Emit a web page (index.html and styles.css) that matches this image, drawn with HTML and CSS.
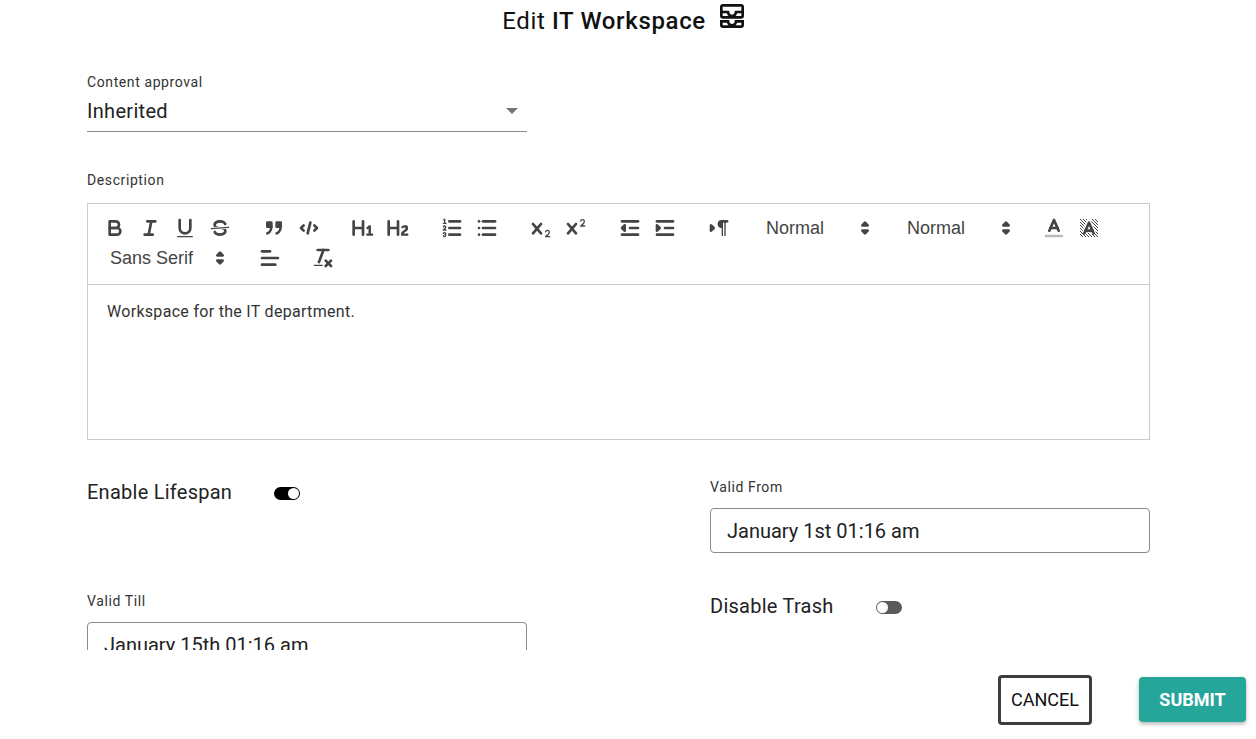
FILE: index.html
```html
<!DOCTYPE html>
<html>
<head>
<meta charset="UTF-8">
<title>Edit IT Workspace</title>
<link rel="stylesheet" href="styles.css">
</head>
<body>
<div class="page">
	<h1 class="title">Edit <span class="title-name">IT Workspace</span>
		<svg class="title-icon" viewBox="0 0 24 24"><path d="M19 3H5c-1.1 0-2 .9-2 2v7c0 1.1.9 2 2 2h14c1.1 0 2-.9 2-2V5c0-1.1-.9-2-2-2zM5 10h3.13c.21.78.67 1.47 1.27 2H5v-2zm14 2h-4.4c.6-.53 1.06-1.22 1.27-2H19v2zm0-4h-5v1c0 1.07-.93 2-2 2s-2-.93-2-2V8H5V5h14v3zm-2 7h-3v1c0 .47-.19.9-.48 1.25-.37.45-.92.75-1.52.75s-1.15-.3-1.52-.75c-.29-.35-.48-.78-.48-1.25v-1H3v4c0 1.1.9 2 2 2h14c1.1 0 2-.9 2-2v-4h-4zM5 17h3.13c.02.09.06.17.09.25.24.68.65 1.28 1.18 1.75H5v-2zm14 2h-4.4c.54-.47.95-1.07 1.18-1.75.03-.08.07-.16.09-.25H19v2z"/></svg>
	</h1>

	<div class="scroll">
		<div class="select-field">
			<label class="field-label">Content approval</label>
			<div class="select-value">Inherited<span class="select-arrow"></span></div>
		</div>

		<label class="field-label desc-label">Description</label>
		<div class="editor">
			<div class="toolbar">
				<span class="group">
					<button class="tool"><svg viewBox="0 0 18 18"><path class="st" d="M5,4H9.5A2.5,2.5,0,0,1,12,6.5v0A2.5,2.5,0,0,1,9.5,9H5A0,0,0,0,1,5,9V4A0,0,0,0,1,5,4Z"/><path class="st" d="M5,9h5.5A2.5,2.5,0,0,1,13,11.5v0A2.5,2.5,0,0,1,10.5,14H5a0,0,0,0,1,0,0V9A0,0,0,0,1,5,9Z"/></svg></button>
					<button class="tool"><svg viewBox="0 0 18 18"><line class="st" x1="7" x2="13" y1="4" y2="4"/><line class="st" x1="5" x2="11" y1="14" y2="14"/><line class="st" x1="8" x2="10" y1="14" y2="4"/></svg></button>
					<button class="tool"><svg viewBox="0 0 18 18"><path class="st" d="M5,3V9a4.012,4.012,0,0,0,4,4H9a4.012,4.012,0,0,0,4-4V3"/><rect class="fl" height="1" rx=".5" ry=".5" width="12" x="3" y="15"/></svg></button>
					<button class="tool"><svg viewBox="0 0 18 18"><line class="st thin" x1="15.5" x2="2.5" y1="8.5" y2="9.5"/><path class="fl" d="M9.007,8C6.542,7.791,6,7.519,6,6.5,6,5.792,7.283,5,9,5c1.571,0,2.765.679,2.969,1.309a1,1,0,0,0,1.9-.617C13.356,4.106,11.354,3,9,3,6.2,3,4,4.538,4,6.5a3.2,3.2,0,0,0,.5,1.843Z"/><path class="fl" d="M8.984,10C11.457,10.208,12,10.479,12,11.5c0,.708-1.283,1.5-3,1.5-1.571,0-2.765-.679-2.969-1.309a1,1,0,1,0-1.9.617C4.644,13.894,6.646,15,9,15c2.8,0,5-1.538,5-3.5a3.2,3.2,0,0,0-.5-1.843Z"/></svg></button>
				</span>
				<span class="group">
					<button class="tool"><svg viewBox="0 0 18 18"><rect class="st fl" height="3" width="3" x="4" y="5"/><rect class="st fl" height="3" width="3" x="11" y="5"/><path class="st" d="M7,8c0,4.031-3,5-3,5"/><path class="st" d="M14,8c0,4.031-3,5-3,5"/></svg></button>
					<button class="tool"><svg viewBox="0 0 18 18"><polyline class="st" points="5 7 3 9 5 11"/><polyline class="st" points="13 7 15 9 13 11"/><line class="st" x1="10" x2="8" y1="5" y2="13"/></svg></button>
				</span>
				<span class="group">
					<button class="tool"><svg viewBox="0 0 18 18"><path class="fl" d="M10,4V14a1,1,0,0,1-2,0V10H3v4a1,1,0,0,1-2,0V4A1,1,0,0,1,3,4V8H8V4a1,1,0,0,1,2,0Zm6.06787,9.209H14.98975V7.59863a.54085.54085,0,0,0-.605-.60547h-.62744a1.01119,1.01119,0,0,0-.748.29688L11.645,8.56641a.5435.5435,0,0,0-.022.8584l.28613.30762a.53861.53861,0,0,0,.84717.0332l.09912-.08789a1.2137,1.2137,0,0,0,.2417-.35254h.02246s-.01123.30859-.01123.60547V13.209H12.041a.54085.54085,0,0,0-.605.60547v.43945a.54085.54085,0,0,0,.605.60547h4.02686a.54085.54085,0,0,0,.605-.60547v-.43945A.54085.54085,0,0,0,16.06787,13.209Z"/></svg></button>
					<button class="tool"><svg viewBox="0 0 18 18"><path class="fl" d="M16.73975,13.81445v.43945a.54085.54085,0,0,1-.605.60547H11.855a.58392.58392,0,0,1-.64893-.60547V14.0127c0-2.90527,3.39941-3.42187,3.39941-4.55469a.77675.77675,0,0,0-.84717-.78125,1.17684,1.17684,0,0,0-.83594.38477c-.2749.26367-.561.374-.85791.13184l-.4292-.34082c-.30811-.24219-.38525-.51758-.1543-.81445a2.97155,2.97155,0,0,1,2.45361-1.17676,2.45393,2.45393,0,0,1,2.68408,2.40918c0,2.45312-3.1792,2.92676-3.27832,3.93848h2.79443A.54085.54085,0,0,1,16.73975,13.81445ZM9,3A.99974.99974,0,0,0,8,4V8H3V4A1,1,0,0,0,1,4V14a1,1,0,0,0,2,0V10H8v4a1,1,0,0,0,2,0V4A.99974.99974,0,0,0,9,3Z"/></svg></button>
				</span>
				<span class="group">
					<button class="tool"><svg viewBox="0 0 18 18"><line class="st" x1="7" x2="15" y1="4" y2="4"/><line class="st" x1="7" x2="15" y1="9" y2="9"/><line class="st" x1="7" x2="15" y1="14" y2="14"/><line class="st thin" x1="2.5" x2="4.5" y1="5.5" y2="5.5"/><path class="fl" d="M3.5,6A0.5,0.5,0,0,1,3,5.5V3.085l-0.276.138A0.5,0.5,0,0,1,2.053,3c-0.124-.247-0.023-0.324.224-0.447l1-.5A0.5,0.5,0,0,1,4,2.5v3A0.5,0.5,0,0,1,3.5,6Z"/><path class="st thin" d="M4.5,10.5h-2c0-.234,1.85-1.076,1.85-2.234A0.959,0.959,0,0,0,2.5,8.156"/><path class="st thin" d="M2.5,14.846a0.959,0.959,0,0,0,1.85-.109A0.7,0.7,0,0,0,3.75,14a0.688,0.688,0,0,0,.6-0.736,0.959,0.959,0,0,0-1.85-.109"/></svg></button>
					<button class="tool"><svg viewBox="0 0 18 18"><line class="st" x1="6" x2="15" y1="4" y2="4"/><line class="st" x1="6" x2="15" y1="9" y2="9"/><line class="st" x1="6" x2="15" y1="14" y2="14"/><line class="st" x1="3" x2="3" y1="4" y2="4"/><line class="st" x1="3" x2="3" y1="9" y2="9"/><line class="st" x1="3" x2="3" y1="14" y2="14"/></svg></button>
				</span>
				<span class="group">
					<button class="tool"><svg viewBox="0 0 18 18"><path class="fl" d="M15.5,15H13.861a3.858,3.858,0,0,0,1.914-2.975,1.8,1.8,0,0,0-1.6-1.751A1.921,1.921,0,0,0,12.021,11.7a0.50013,0.50013,0,1,0,.957.291h0a0.914,0.914,0,0,1,1.053-.725,0.81,0.81,0,0,1,.744.762c0,1.076-1.16971,1.86982-1.93971,2.43082A1.45639,1.45639,0,0,0,12,15.5a0.5,0.5,0,0,0,.5.5h3A0.5,0.5,0,0,0,15.5,15Z"/><path class="fl" d="M9.65,5.241a1,1,0,0,0-1.409.108L6,7.964,3.759,5.349A1,1,0,0,0,2.192,6.59178Q2.21541,6.6213,2.241,6.649L4.684,9.5,2.241,12.35A1,1,0,0,0,3.71,13.70722q0.02557-.02768.049-0.05722L6,11.036,8.241,13.65a1,1,0,1,0,1.567-1.24277Q9.78459,12.3777,9.759,12.35L7.316,9.5,9.759,6.651A1,1,0,0,0,9.65,5.241Z"/></svg></button>
					<button class="tool"><svg viewBox="0 0 18 18"><path class="fl" d="M15.5,7H13.861a4.015,4.015,0,0,0,1.914-2.975,1.8,1.8,0,0,0-1.6-1.751A1.922,1.922,0,0,0,12.021,3.7a0.5,0.5,0,1,0,.957.291,0.917,0.917,0,0,1,1.053-.725,0.81,0.81,0,0,1,.744.762c0,1.077-1.164,1.925-1.934,2.486A1.423,1.423,0,0,0,12,7.5a0.5,0.5,0,0,0,.5.5h3A0.5,0.5,0,0,0,15.5,7Z"/><path class="fl" d="M9.651,5.241a1,1,0,0,0-1.41.108L6,7.964,3.759,5.349a1,1,0,1,0-1.519,1.3L4.683,9.5,2.241,12.35a1,1,0,1,0,1.519,1.3L6,11.036,8.241,13.65a1,1,0,0,0,1.519-1.3L7.317,9.5,9.759,6.651A1,1,0,0,0,9.651,5.241Z"/></svg></button>
				</span>
				<span class="group">
					<button class="tool"><svg viewBox="0 0 18 18"><line class="st" x1="3" x2="15" y1="14" y2="14"/><line class="st" x1="3" x2="15" y1="4" y2="4"/><line class="st" x1="9" x2="15" y1="9" y2="9"/><polyline class="st fl" points="5 7 5 11 3 9 5 7"/></svg></button>
					<button class="tool"><svg viewBox="0 0 18 18"><line class="st" x1="3" x2="15" y1="14" y2="14"/><line class="st" x1="3" x2="15" y1="4" y2="4"/><line class="st" x1="9" x2="15" y1="9" y2="9"/><polyline class="st fl" points="3 7 3 11 5 9 3 7"/></svg></button>
				</span>
				<span class="group">
					<button class="tool"><svg viewBox="0 0 18 18"><polygon class="st fl" points="3 11 5 9 3 7 3 11"/><line class="st" x1="15" x2="11" y1="4" y2="4"/><path class="fl" d="M11,3a3,3,0,0,0,0,6h1V3H11Z"/><rect class="fl" height="11" width="1" x="11" y="4"/><rect class="fl" height="11" width="1" x="13" y="4"/></svg></button>
				</span>
				<span class="group picker-group">
					<span class="picker"><span class="picker-label">Normal</span><svg viewBox="0 0 18 18"><polygon class="st fl" points="7 11 9 13 11 11 7 11"/><polygon class="st fl" points="7 7 9 5 11 7 7 7"/></svg></span>
					<span class="picker"><span class="picker-label">Normal</span><svg viewBox="0 0 18 18"><polygon class="st fl" points="7 11 9 13 11 11 7 11"/><polygon class="st fl" points="7 7 9 5 11 7 7 7"/></svg></span>
					<button class="tool"><svg viewBox="0 0 18 18"><line class="st color-line" x1="3" x2="15" y1="15" y2="15"/><polyline class="st" points="5.5 11 9 3 12.5 11"/><line class="st" x1="11.63" x2="6.38" y1="9" y2="9"/></svg></button>
					<button class="tool"><svg viewBox="0 0 18 18"><defs><pattern id="hatch" width="2.25" height="2.25" patternUnits="userSpaceOnUse"><rect width=".75" height=".75" fill="#444"/><rect x=".75" y=".75" width=".75" height=".75" fill="#444"/><rect x="1.5" y="1.5" width=".75" height=".75" fill="#444"/></pattern></defs><rect x="2.25" y="2.25" width="13.5" height="13.5" fill="url(#hatch)"/><polyline class="halo" points="5.5 13 9 5 12.5 13"/><polyline class="st" points="5.5 13 9 5 12.5 13"/><line class="st" x1="11.63" x2="6.38" y1="11" y2="11"/></svg></button>
				</span>
				<span class="group font-group">
					<span class="picker font-picker"><span class="picker-label">Sans Serif</span><svg viewBox="0 0 18 18"><polygon class="st fl" points="7 11 9 13 11 11 7 11"/><polygon class="st fl" points="7 7 9 5 11 7 7 7"/></svg></span>
					<button class="tool"><svg viewBox="0 0 18 18"><line class="st" x1="3" x2="15" y1="9" y2="9"/><line class="st" x1="3" x2="13" y1="14" y2="14"/><line class="st" x1="3" x2="9" y1="4" y2="4"/></svg></button>
				</span>
				<span class="group">
					<button class="tool"><svg viewBox="0 0 18 18"><line class="st" x1="5" x2="13" y1="3" y2="3"/><line class="st" x1="6" x2="9.35" y1="12" y2="3"/><line class="st" x1="11" x2="15" y1="11" y2="15"/><line class="st" x1="15" x2="11" y1="11" y2="15"/><rect class="fl" height="1" rx=".5" ry=".5" width="7" x="2" y="14"/></svg></button>
				</span>
			</div>
			<div class="editor-body">Workspace for the IT department.</div>
		</div>

		<div class="two-col">
			<div class="switch-row">
				<span class="switch-label">Enable Lifespan</span>
				<span class="switch switch-on"></span>
			</div>
			<div class="date-field">
				<label class="field-label">Valid From</label>
				<div class="date-input">January 1st 01:16 am</div>
			</div>
			<div class="date-field">
				<label class="field-label">Valid Till</label>
				<div class="date-input">January 15th 01:16 am</div>
			</div>
			<div class="switch-row">
				<span class="switch-label">Disable Trash</span>
				<span class="switch"></span>
			</div>
		</div>
	</div>

	<div class="actions">
		<button class="btn btn-cancel">CANCEL</button>
		<button class="btn btn-submit">SUBMIT</button>
	</div>
</div>
</body>
</html>
```
FILE: styles.css
```css
* {
	box-sizing: border-box;
}

html, body {
	margin: 0;
	height: 100%;
	background: #fff;
	overflow: hidden;
}

body {
	font-family: Roboto, "Liberation Sans", sans-serif;
	color: rgba(0, 0, 0, 0.87);
}

.page {
	height: 739px;
	display: flex;
	flex-direction: column;
}

.title {
	margin: 0;
	height: 42px;
	padding-top: 3px;
	padding-right: 6px;
	display: flex;
	justify-content: center;
	align-items: flex-start;
	font-size: 24px;
	line-height: 36px;
	font-weight: 400;
	letter-spacing: 0.65px;
	white-space: pre;
	color: #111;
}

.title-name {
	font-weight: 500;
}

.title-icon {
	width: 32px;
	height: 32px;
	margin-left: 10px;
	margin-top: -3px;
	fill: #111;
}

.scroll {
	height: 608px;
	overflow: hidden;
	padding: 32px 106px 0 87px;
}

.field-label {
	display: block;
	font-size: 14px;
	line-height: 16px;
	letter-spacing: 0.6px;
	color: #333;
}

.select-field {
	width: 440px;
}

.select-value {
	position: relative;
	height: 38px;
	margin-top: 4px;
	border-bottom: 1px solid #8a8a8a;
	font-size: 20px;
	line-height: 34px;
	letter-spacing: 0.3px;
	color: #222;
}

.select-arrow {
	position: absolute;
	right: 9px;
	top: 14px;
	border-left: 6px solid transparent;
	border-right: 6px solid transparent;
	border-top: 6px solid #757575;
}

.desc-label {
	margin-top: 40px;
	height: 31px;
}

.editor {
	height: 237px;
	border: 1px solid #ccc;
}

.toolbar {
	height: 81px;
	padding: 9px 0 0 9px;
	border-bottom: 1px solid #ccc;
	display: flex;
	flex-wrap: wrap;
	align-content: flex-start;
}

.group {
	display: flex;
	margin-right: 19px;
	height: 30px;
	align-items: center;
}

.picker-group {
	margin-left: -1px;
	margin-right: 0;
}

.font-group {
	margin-right: 18px;
}

.tool {
	width: 35px;
	height: 30px;
	padding: 0;
	border: 0;
	background: none;
	display: flex;
	align-items: center;
	justify-content: center;
}

.tool svg {
	width: 24px;
	height: 24px;
}

.st {
	fill: none;
	stroke: #444;
	stroke-width: 2;
	stroke-linecap: round;
	stroke-linejoin: round;
}

.fl {
	fill: #444;
}

.thin {
	stroke-width: 1;
}

.halo {
	fill: none;
	stroke: #fff;
	stroke-width: 4;
}

.color-line {
	stroke: #bbb;
}

.picker {
	width: 141px;
	height: 30px;
	padding-left: 12px;
	display: flex;
	align-items: center;
	font-family: "Liberation Sans", Arial, sans-serif;
	font-size: 18px;
	color: #444;
}

.picker svg {
	width: 24px;
	height: 24px;
	margin-left: auto;
	margin-right: 18px;
}

.font-picker {
	width: 153px;
	padding-left: 13px;
	margin-right: 2px;
}

.editor-body {
	padding: 17px 19px;
	font-size: 16px;
	line-height: 19px;
	letter-spacing: 0.3px;
	color: #333;
}

.two-col {
	display: grid;
	grid-template-columns: 440px 440px;
	column-gap: 183px;
	row-gap: 39px;
	margin-top: 38px;
}

.switch-row {
	display: flex;
	align-items: flex-start;
	padding-top: 2px;
}

.switch-label {
	font-size: 20px;
	line-height: 24px;
	letter-spacing: 0.25px;
	margin-right: 42px;
	color: #222;
}

.switch {
	position: relative;
	display: block;
	width: 26px;
	height: 13px;
	margin-top: 7px;
	border-radius: 7px;
	background: #5a5a5a;
}

.switch::after {
	content: "";
	position: absolute;
	left: 1px;
	top: 1px;
	width: 11px;
	height: 11px;
	border-radius: 50%;
	background: #fff;
}

.switch-on {
	background: #000;
}

.switch-on::after {
	left: 14px;
}

.date-field .field-label {
	height: 30px;
	padding-top: 1px;
}

.date-input {
	height: 45px;
	padding: 0 16px;
	border: 1px solid #8a8a8a;
	border-radius: 4px;
	font-size: 20px;
	line-height: 45px;
	color: #222;
}

.actions {
	flex: 1;
	display: flex;
	justify-content: flex-end;
	align-items: center;
	padding: 10px 10px 0 0;
	gap: 47px;
}

.btn {
	font-family: Roboto, "Liberation Sans", sans-serif;
	font-size: 18px;
	border-radius: 4px;
	cursor: pointer;
}

.btn-cancel {
	width: 94px;
	height: 50px;
	border: 3px solid #3d3d3d;
	background: #fff;
	color: #111;
}

.btn-submit {
	width: 107px;
	height: 45px;
	border: 0;
	font-weight: 700;
	background: #26a69a;
	color: #fff;
	box-shadow: 0 2px 4px rgba(0, 0, 0, 0.3);
}
```
